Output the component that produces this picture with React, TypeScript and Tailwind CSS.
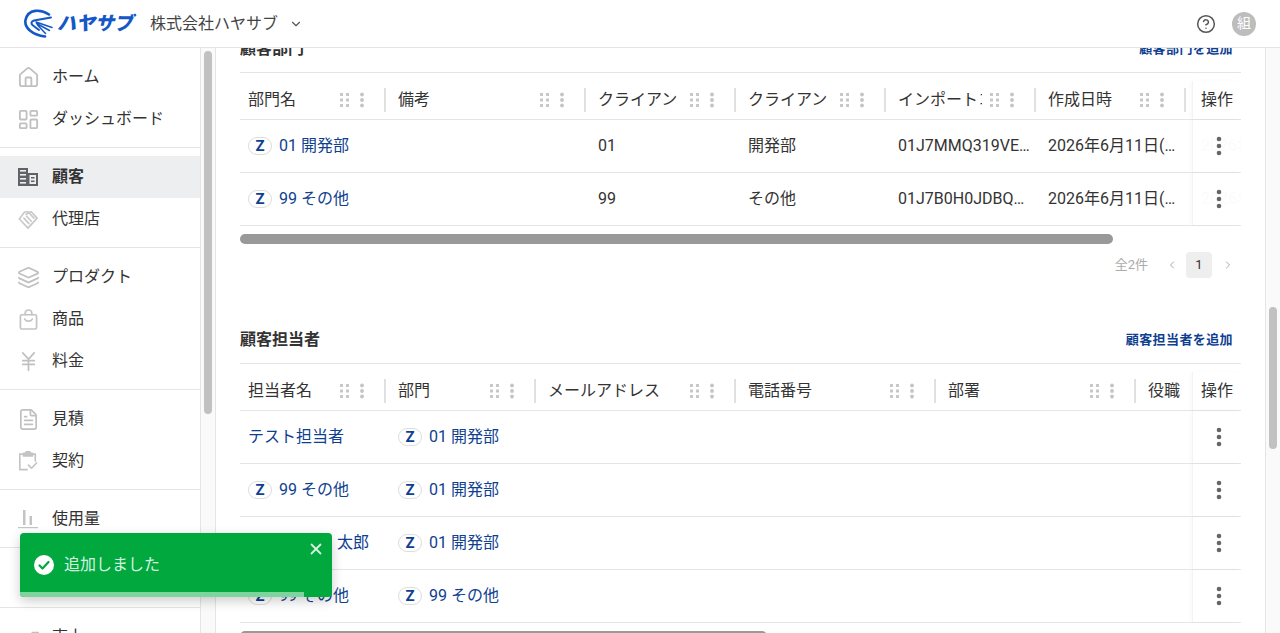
import React from "react";
import { ChevronDown, ChevronLeft, ChevronRight, CircleHelp, FileText, Home, JapaneseYen, Layers, LayoutDashboard, X, TrendingUp, Receipt } from "lucide-react";

const iconCls = "w-[23px] h-[23px] shrink-0 text-[#c0c0c0]";

const BuildingIcon = () => (
  <svg viewBox="0 0 20 18" className="w-[20px] h-[18px]" fill="#5f6368">
    <path d="M0 0h10v5h10v13H0z" />
    <g fill="#eceef0">
      <rect x="2" y="2" width="6" height="1.6" />
      <rect x="2" y="6" width="6" height="1.6" />
      <rect x="2" y="10" width="6" height="1.6" />
      <rect x="2" y="14" width="6" height="1.6" />
      <rect x="11.5" y="7" width="6.5" height="9" />
    </g>
    <rect x="13" y="9" width="3.5" height="1.5" />
    <rect x="13" y="12.5" width="3.5" height="1.5" />
  </svg>
);
const HandshakeIcon = () => (
  <svg viewBox="0 0 22 22" className="w-[21px] h-[21px]" fill="none" stroke="#c8c8c8" strokeWidth="1.800" strokeLinejoin="round" strokeLinecap="round">
    <path d="M7 3 10 2.500l2 .5 2.500-.5L21 9.500 11 20.500 1.500 10.500z" />
    <path d="M6.500 9.500l5.500 6M9.500 7.500l5 5.500M9 5.500l3-2 5.500 6" />
  </svg>
);
const BagIcon = () => (
  <svg viewBox="0 0 20 22" className="w-[19px] h-[21px]" fill="none" stroke="#c4c4c4" strokeWidth="1.800" strokeLinejoin="round" strokeLinecap="round">
    <rect x="1.500" y="6" width="17" height="15" rx="1.500" />
    <path d="M6.500 6V4.500a3.500 3.500 0 0 1 7 0V6M6 10.500c1.500 3 6.500 3 8 0" />
  </svg>
);
const ClipboardIcon = () => (
  <svg viewBox="0 0 22 22" className="w-[20px] h-[20px]" fill="none" stroke="#c4c4c4" strokeWidth="1.800" strokeLinejoin="round" strokeLinecap="round">
    <path d="M6 3.500H2v17h8M16 3.500h3V11" />
    <path d="M6 2.500h2.500a2.500 2 0 0 1 5 0H16v3H6z" fill="#c4c4c4" />
    <path d="M11.500 15.500l3.500 3.500 5.500-6" />
  </svg>
);
const BarsIcon = () => (
  <svg viewBox="0 0 20 20" className="w-[20px] h-[20px]" fill="#c4c4c4">
    <rect x="5" y="1" width="2.500" height="15" />
    <rect x="11.500" y="7" width="2.500" height="9" />
    <rect x="0" y="18" width="20" height="1.200" />
  </svg>
);

type NavItem = { label: string; icon: React.ReactNode; active?: boolean };
const groups: NavItem[][] = [
  [
    { label: "ホーム", icon: <Home className={iconCls} strokeWidth={1.9} /> },
    { label: "ダッシュボード", icon: <LayoutDashboard className={iconCls} strokeWidth={1.9} /> },
  ],
  [
    { label: "顧客", icon: <BuildingIcon />, active: true },
    { label: "代理店", icon: <HandshakeIcon /> },
  ],
  [
    { label: "プロダクト", icon: <Layers className={iconCls} strokeWidth={1.8} /> },
    { label: "商品", icon: <BagIcon /> },
    { label: "料金", icon: <JapaneseYen className={iconCls} strokeWidth={1.8} /> },
  ],
  [
    { label: "見積", icon: <FileText className={iconCls} strokeWidth={1.8} /> },
    { label: "契約", icon: <ClipboardIcon /> },
  ],
  [{ label: "使用量", icon: <BarsIcon /> }],
  [{ label: "請求", icon: <Receipt className={iconCls} strokeWidth={1.8} /> }],
  [{ label: "売上", icon: <TrendingUp className={iconCls} strokeWidth={1.8} /> }],
];

const Logo = () => (
  <div className="flex items-center w-[110px]">
    <svg viewBox="0 0 29 29" className="w-[29px] h-[29px] shrink-0" fill="none" stroke="#1458c8" strokeLinecap="round">
      <path d="M25 5.500C17 0 4 -.500 1.500 11 0 19 9 26 21 27.500" strokeWidth="2.600" />
      <path d="M27 8.500 10 11.500C7 12.500 6.500 14.500 9 16.500L15 21" strokeWidth="2" />
      <path d="M12 13l16 5.500M12.500 14.500l13 7M13.500 16l8 8.500" strokeWidth="1.500" />
    </svg>
    <span className="ml-[4px] text-[19px] leading-none font-black italic tracking-[0px] text-[#1458c8] whitespace-nowrap">ハヤサブ</span>
  </div>
);

const GripIcon = () => (
  <svg viewBox="0 0 10 14" className="w-[10px] h-[14px] shrink-0" fill="#c8c8c8">
    {[0, 5.5, 11].map((y) => (
      <React.Fragment key={y}>
        <rect x="0" y={y} width="3" height="3" />
        <rect x="6" y={y} width="3" height="3" />
      </React.Fragment>
    ))}
  </svg>
);
const HeadKebab = () => (
  <svg viewBox="0 0 8 16" className="w-[8px] h-[16px] shrink-0" fill="#c4c4c4">
    <circle cx="4" cy="2.500" r="1.900" />
    <circle cx="4" cy="8" r="1.900" />
    <circle cx="4" cy="13.500" r="1.900" />
  </svg>
);
const RowKebab = () => (
  <svg viewBox="0 0 20 20" className="w-[20px] h-[20px] shrink-0 relative" fill="#666">
    <circle cx="10" cy="3" r="2.300" />
    <circle cx="10" cy="10" r="2.300" />
    <circle cx="10" cy="17" r="2.300" />
  </svg>
);

const ZName = ({ text }: { text: string }) => (
  <span className="flex items-center text-[#0f3f91] min-w-0">
    <span className="w-[24px] h-[18px] shrink-0 rounded-full border border-[#dddddd] flex items-center justify-center text-[15px] leading-none font-bold mr-[7px]">Z</span>
    <span className="whitespace-nowrap">{text}</span>
  </span>
);

type Col = { title: string; w: string };
type Cell = React.ReactNode;

function DataTable({ cols, rows, ghost }: { cols: Col[]; rows: Cell[][]; ghost?: string[] }) {
  return (
    <div className="border-t border-[#e5e5e5] text-[16px] text-[#333333]">
      <div className="flex h-[47px] border-b border-[#e5e5e5]">
        <div className="flex-1 min-w-0 flex overflow-hidden pt-2">
          {cols.map((c) => (
            <div key={c.title} className={`${c.w} shrink-0 flex items-center pl-2 pr-[4px]`}>
              <span className="flex-1 min-w-0 overflow-hidden whitespace-nowrap">{c.title}</span>
              <span className="ml-[8px] mr-[8px] shrink-0"><GripIcon /></span>
              <HeadKebab />
              <span className="ml-[18px] w-[2px] h-[24px] bg-[#e0e0e0] shrink-0" />
            </div>
          ))}
        </div>
        <div className="w-[49px] shrink-0 mt-2 border-l border-[#f3f3f3] shadow-[-2px_0_3px_rgba(0,0,0,0.025)] pl-2 flex items-center whitespace-nowrap">操作</div>
      </div>
      {rows.map((row, i) => (
        <div key={i} className="flex h-[53px] border-b border-[#e5e5e5]">
          <div className="flex-1 min-w-0 flex overflow-hidden">
            {cols.map((c, j) => (
              <div key={c.title} className={`${c.w} shrink-0 flex items-center px-2 min-w-0`}>
                {typeof row[j] === "string" ? <span className="truncate">{row[j]}</span> : row[j]}
              </div>
            ))}
          </div>
          <div className="w-[49px] shrink-0 border-l border-[#f3f3f3] shadow-[-2px_0_3px_rgba(0,0,0,0.025)] pl-4 flex items-center relative overflow-hidden">
            {ghost && <span className="absolute left-[8px] text-[#fbfbfb] whitespace-nowrap">{ghost[i]}</span>}
            <RowKebab />
          </div>
        </div>
      ))}
    </div>
  );
}

const SectionHead = ({ title, action }: { title: string; action: string }) => (
  <div className="flex items-center justify-between h-[46px]">
    <h2 className="text-[16px] font-semibold text-[#333333]">{title}</h2>
    <a className="pr-2 text-[13px] tracking-[0.4px] font-semibold text-[#0f3f91]">{action}</a>
  </div>
);

const dept: Col[] = [
  { title: "部門名", w: "w-[150px]" },
  { title: "備考", w: "w-[200px]" },
  { title: "クライアントコード", w: "w-[150px]" },
  { title: "クライアント名", w: "w-[150px]" },
  { title: "インポートコード", w: "w-[150px]" },
  { title: "作成日時", w: "w-[150px]" },
];
const people: Col[] = [
  { title: "担当者名", w: "w-[150px]" },
  { title: "部門", w: "w-[150px]" },
  { title: "メールアドレス", w: "w-[200px]" },
  { title: "電話番号", w: "w-[200px]" },
  { title: "部署", w: "w-[200px]" },
  { title: "役職", w: "w-[150px]" },
];

export default function App() {
  return (
    <div className="h-screen overflow-hidden flex flex-col bg-white relative font-[Roboto,'Noto_Sans_CJK_JP',sans-serif] text-[#333333]">
      <header className="h-[48px] shrink-0 border-b border-[#e5e5e5] flex items-center pl-[24px] pr-[24px]">
        <Logo />
        <span className="ml-[17px] text-[16px] text-[#444444] whitespace-nowrap -translate-x-px">株式会社ハヤサブ</span>
        <ChevronDown className="w-[14px] h-[14px] ml-[10px] text-[#555555]" />
        <div className="ml-auto flex items-center gap-[16px]">
          <CircleHelp className="w-[20px] h-[20px] text-[#555555]" strokeWidth={1.8} />
          <span className="w-[24px] h-[24px] rounded-full bg-[#bdbdbd] text-white text-[14px] flex items-center justify-center">組</span>
        </div>
      </header>

      <div className="flex-1 min-h-0 flex overflow-hidden">
        <nav className="w-[201px] shrink-0 border-r border-[#e5e5e5] overflow-hidden">
          {groups.map((g, i) => (
            <div key={i} className={`pt-2 border-b border-[#e5e5e5] ${i === 5 ? "pb-[9px]" : "pb-[7px]"}`}>
              {g.map((it) => (
                <div key={it.label} className={`h-[42px] flex items-center pl-[18px] ${it.active ? "bg-[#eceef0] font-semibold" : ""}`}>
                  <span className="w-[20px] flex items-center justify-center shrink-0">{it.icon}</span>
                  <span className="ml-[14px] text-[16px] whitespace-nowrap">{it.label}</span>
                </div>
              ))}
            </div>
          ))}
        </nav>
        <div className="w-[14px] shrink-0 bg-[#fafafa] pl-[3px] pt-[3px]">
          <div className="w-[8px] h-[363px] rounded-full bg-[#c1c1c1]" />
        </div>

        <main className="flex-1 min-w-0 border-l border-[#e5e5e5] px-[24px] overflow-hidden">
          <div className="-mt-[22px]">
            <section className="mb-[39px]">
              <SectionHead title="顧客部門" action="顧客部門を追加" />
              <DataTable
                cols={dept}
                ghost={["2026年", "2026年"]}
                rows={[
                  [<ZName text="01 開発部" />, "", "01", "開発部", "01J7MMQ319VEK2N8ABCDEF", "2026年6月11日(木) 10:00"],
                  [<ZName text="99 その他" />, "", "99", "その他", "01J7B0H0JDBQ5T3XABCDEF", "2026年6月11日(木) 10:00"],
                ]}
              />
              <div className="mt-2 h-[10px] w-[873px] rounded-full bg-[#999999]" />
              <div className="mt-2 h-[26px] flex items-center justify-end text-[13px]">
                <span className="text-[#aaaaaa] mr-[11px]">全2件</span>
                <span className="w-[26px] mr-px flex justify-center"><ChevronLeft className="w-[12px] h-[12px] text-[#aaaaaa]" /></span>
                <span className="w-[26px] h-[26px] rounded bg-[#eeeeee] flex items-center justify-center text-[#333333]">1</span>
                <span className="w-[26px] ml-[3px] flex justify-center"><ChevronRight className="w-[12px] h-[12px] text-[#aaaaaa]" /></span>
              </div>
            </section>

            <section>
              <SectionHead title="顧客担当者" action="顧客担当者を追加" />
              <DataTable
                cols={people}
                rows={[
                  [<span className="text-[#0f3f91] whitespace-nowrap">テスト担当者</span>, <ZName text="01 開発部" />, "", "", "", ""],
                  [<ZName text="99 その他" />, <ZName text="01 開発部" />, "", "", "", ""],
                  [<ZName text="99 テス 太郎" />, <ZName text="01 開発部" />, "", "", "", ""],
                  [<ZName text="99 その他" />, <ZName text="99 その他" />, "", "", "", ""],
                ]}
              />
              <div className="mt-2 h-[10px] w-[527px] rounded-full bg-[#999999]" />
            </section>
          </div>
        </main>

        <div className="w-[15px] shrink-0 bg-[#fafafa] border-l border-[#e5e5e5] pl-[3px] pt-[259px]">
          <div className="w-[8px] h-[142px] rounded-full bg-[#c1c1c1]" />
        </div>
      </div>

      <div className="absolute left-[20px] top-[533px] w-[312px] h-[64px] rounded bg-[#00a83e] overflow-hidden shadow-[0_4px_12px_rgba(0,0,0,0.2)] flex items-start text-[#d6f2e0]">
        <div className="flex items-center h-[59px] pt-[5px] pl-[14px]">
          <svg viewBox="0 0 20 20" className="w-[20px] h-[20px]">
            <circle cx="10" cy="10" r="10" fill="white" />
            <path d="M5.500 10.500l3 3 6-6.500" fill="none" stroke="#00a83e" strokeWidth="2.200" strokeLinecap="round" strokeLinejoin="round" />
          </svg>
          <span className="ml-[10px] text-[16px] whitespace-nowrap">追加しました</span>
        </div>
        <X className="w-[18px] h-[18px] ml-auto mt-[7px] mr-[7px]" strokeWidth={2.400} />
        <div className="absolute left-0 bottom-0 h-[5px] w-[284px] bg-[#7dd49c]" />
      </div>
    </div>
  );
}
